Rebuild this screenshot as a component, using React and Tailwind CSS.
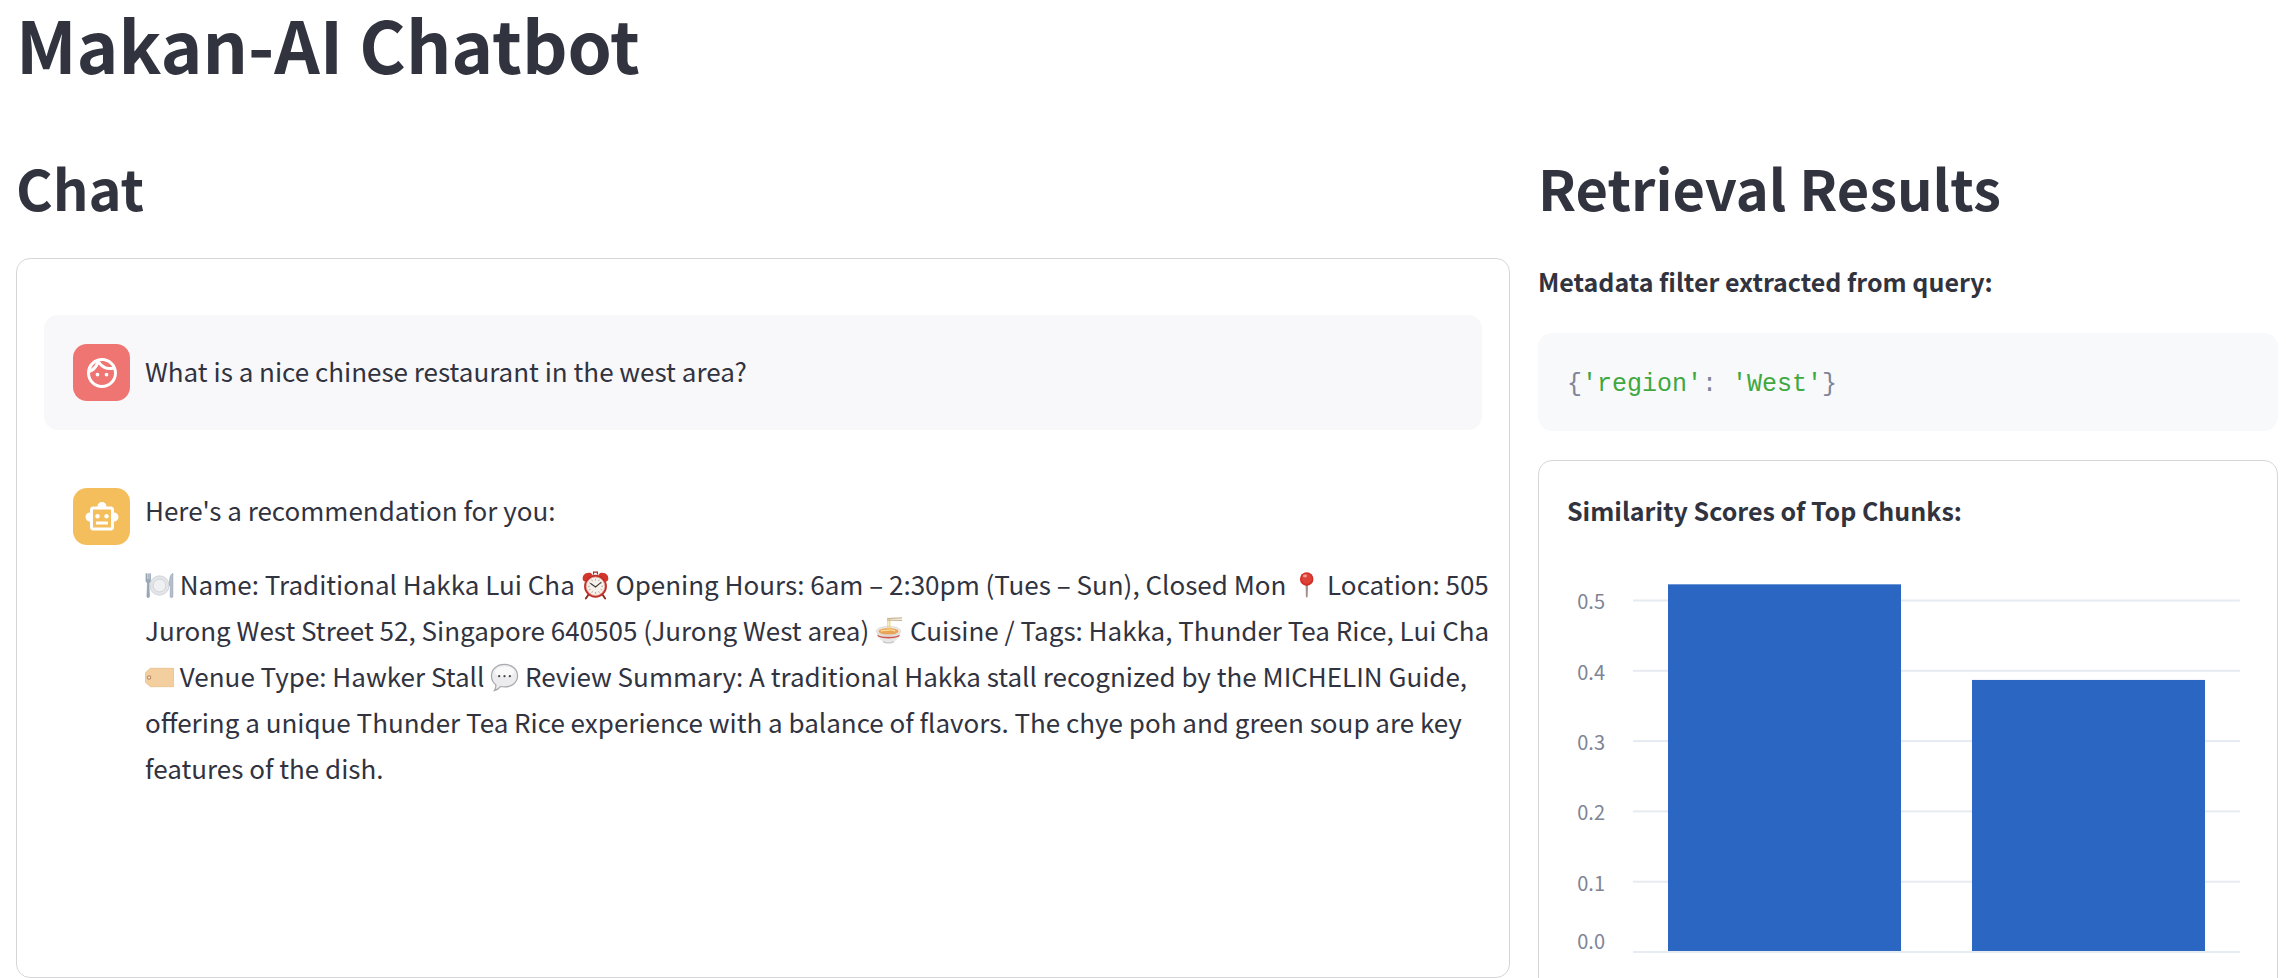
import { MdOutlineFace, MdOutlineSmartToy } from "react-icons/md";

function Emoji({ label, children }) {
  return (
    <svg
      role="img"
      aria-label={label}
      viewBox="0 0 30 30"
      className="inline-block size-[29px] align-[-5px]"
    >
      {children}
    </svg>
  );
}

function Plate() {
  return (
    <Emoji label="Plate with cutlery">
      <circle cx="15" cy="15" r="10" fill="#e3e5e8" stroke="#c9ccd1" strokeWidth="0.8" />
      <circle cx="15" cy="15" r="6.6" fill="#eff0f2" stroke="#cfd2d6" strokeWidth="0.9" />
      <path d="M1 2.5v7c0 1.8 1 2.6 1.6 2.8L2 26.5c0 1.3 2.6 1.3 2.6 0L4 12.300c.8-.2 1.700-1 1.700-2.800v-7" fill="#9aa8b8" stroke="#8494a6" strokeWidth="0.6" />
      <path d="M2.500 2.500v6M4.200 2.500v6" stroke="#dfe5ec" strokeWidth="0.7" />
      <path d="M28.800 2.500c-2.600 1-3.600 5-3.500 12.500l1 1-.3 10.500c0 1.300 2.800 1.300 2.800 0z" fill="#b3bfcc" stroke="#8c9aab" strokeWidth="0.6" />
    </Emoji>
  );
}

function Clock() {
  return (
    <Emoji label="Alarm clock">
      <path d="M8 24l-3 4.500M22 24l3 4.500" stroke="#8d2a24" strokeWidth="2" strokeLinecap="round" />
      <path d="M2 9.500C.6 5 4.500.8 10.500 2.200L12 4 4 11zM28 9.500C29.400 5 25.500.8 19.500 2.200L18 4l8 7z" fill="#d2352c" />
      <path d="M13 3.500V1.200h4v2.300" fill="none" stroke="#9c2a24" strokeWidth="1.200" />
      <circle cx="15" cy="15.800" r="11.800" fill="#bf2f27" />
      <circle cx="15" cy="15.800" r="9.600" fill="#f6f1ea" stroke="#e9a79f" strokeWidth="0.800" />
      <path d="M15 8v1.800M15 21.800v1.800M7.200 15.800H9M21 15.800h1.800M11.100 9l.8 1.500M18.900 9l-.8 1.500M8.300 12l1.400.8M21.700 12l-1.400.8M8.300 19.600l1.400-.8M21.700 19.600l-1.400-.8M11.100 22.500l.8-1.500M18.900 22.500l-.8-1.500" stroke="#8b8680" strokeWidth="0.700" />
      <path d="M10 13l5 3.500 5.500-4.500" fill="none" stroke="#3c3a38" strokeWidth="1.200" strokeLinecap="round" />
    </Emoji>
  );
}

function Pin() {
  return (
    <Emoji label="Round pushpin">
      <path d="M14 12h2.600l-.4 14.500c-.1 1.300-1.700 1.300-1.800 0z" fill="#a38d84" />
      <circle cx="15.200" cy="8.200" r="7" fill="#cf2d25" />
      <circle cx="15.200" cy="7.800" r="5.400" fill="#de4138" />
      <ellipse cx="13.500" cy="5.200" rx="2.200" ry="1.500" fill="#f39a91" />
    </Emoji>
  );
}

function Bowl() {
  return (
    <Emoji label="Steaming bowl">
      <ellipse cx="14" cy="25.500" rx="6" ry="1.800" fill="#c9c9cb" />
      <path d="M1.500 14.500c.3 7 5 11.500 12.500 11.500s12.200-4.500 12.500-11.500z" fill="#e9e7e6" />
      <path d="M2.300 18.300c6 3 17.500 3 23.400 0l-.7 2c-5.500 2.600-16.500 2.600-22 0z" fill="#d0574d" />
      <ellipse cx="14" cy="14.500" rx="12.500" ry="4.600" fill="#f1efed" stroke="#cdc9c6" strokeWidth="0.700" />
      <ellipse cx="14" cy="14.800" rx="10.500" ry="3.400" fill="#e8a45b" />
      <path d="M6 14.800c3-2 5-.2 8-1.200s5 .2 7 .8" fill="none" stroke="#f8dc94" strokeWidth="1.300" />
      <path d="M13.300 14V2.500M15.300 14V2.500" stroke="#f0cf6c" strokeWidth="1.200" />
      <path d="M12.500 1.600L28 1M12.500 3.300L28 3.600" stroke="#c9b592" strokeWidth="1.300" />
    </Emoji>
  );
}

function Tag() {
  return (
    <Emoji label="Label">
      <path d="M5.500 5.500H29c.6 0 1 .4 1 1v17c0 .6-.4 1-1 1H5.500L.5 20V10z" fill="#f3cfa0" stroke="#e6bb85" strokeWidth="0.800" />
      <circle cx="4.200" cy="15" r="2.300" fill="#c28d63" />
      <circle cx="4.200" cy="15" r="1.100" fill="#f8f4ef" />
    </Emoji>
  );
}

function Bubble() {
  return (
    <Emoji label="Speech balloon">
      <path d="M15 1.500c8 0 13.500 5 13.500 11.600S23 24.700 15 24.700c-1.500 0-2.800-.1-4-.4-1.500 2-3.700 3.600-6.500 4.200 1.200-1.800 1.700-3.800 1.500-6C3.200 20.300 1.500 17 1.500 13.100 1.500 6.500 7 1.500 15 1.500z" fill="#ececee" stroke="#a9aaae" strokeWidth="1.300" />
      <ellipse cx="15" cy="9" rx="10" ry="5.500" fill="#f9f9fa" />
      <circle cx="9.500" cy="13.600" r="1.200" fill="#45464a" />
      <circle cx="15" cy="13.600" r="1.200" fill="#45464a" />
      <circle cx="20.500" cy="13.600" r="1.200" fill="#45464a" />
    </Emoji>
  );
}

function UserMessage({ children }) {
  return (
    <article className="flex gap-[15px] rounded-[14px] bg-[#f8f8fa] py-[29px] pl-[29px]">
      <div className="flex size-[57px] shrink-0 items-center justify-center rounded-[14px] bg-[#ee7571] text-white">
        <MdOutlineFace className="size-9" />
      </div>
      <div className="-mt-1 min-w-0 flex-1 self-center">{children}</div>
    </article>
  );
}

function AssistantMessage({ children }) {
  return (
    <article className="flex gap-[15px] py-[29px] pl-[29px]">
      <div className="flex size-[57px] shrink-0 items-center justify-center rounded-[14px] bg-[#f5be5d] text-white">
        <MdOutlineSmartToy className="size-9" />
      </div>
      <div className="-mt-px -mr-4 flex min-w-0 flex-1 flex-col gap-7">{children}</div>
    </article>
  );
}

const ticks = [0, 0.1, 0.2, 0.3, 0.4, 0.5];
const scores = [0.523, 0.387];
const baseY = 393;
const unit = 703;

function ScoreChart() {
  return (
    <svg viewBox="0 0 682 440" className="block w-full" role="img" aria-label="Similarity scores">
      {ticks.map((t) => (
        <g key={t}>
          <rect x="66" y={baseY - t * unit - 1} width="607" height="2" fill="#e6eaf1" />
          <text
            x="38"
            y={t === 0 ? baseY - 3 : baseY - t * unit + 9}
            textAnchor="end"
            className="fill-[#808495] text-[20px]"
          >
            {t.toFixed(1)}
          </text>
        </g>
      ))}
      {scores.map((s, i) => (
        <rect
          key={s}
          x={101 + i * 304}
          y={baseY - s * unit}
          width="233"
          height={s * unit - 1}
          fill="#2b66c2"
        />
      ))}
    </svg>
  );
}

export default function App() {
  return (
    <main className="h-screen overflow-hidden bg-white pr-2 pl-4 font-['Noto_Sans_CJK_SC','Noto_Sans',sans-serif] text-[26px] leading-[46px] text-[#31333f]">
      <h1 className="text-[71px] leading-[86px] font-bold">Makan-AI Chatbot</h1>
      <div className="mt-[66px] flex items-start justify-between">
        <section className="w-[calc(66.6667%-14px)]">
          <h2 className="text-[56px] leading-[70px] font-semibold">Chat</h2>
          <div className="mt-9 flex min-h-[720px] flex-col gap-[29px] rounded-[14px] border border-[#d6d6d9] px-[27px] pt-14 pb-7">
            <UserMessage>
              <p>What is a nice chinese restaurant in the west area?</p>
            </UserMessage>
            <AssistantMessage>
              <p>Here's a recommendation for you:</p>
              <p>
                <Plate /> Name: Traditional Hakka Lui Cha <Clock /> Opening Hours: 6am – 2:30pm (Tues – Sun),
                Closed Mon <Pin /> Location: 505 Jurong West Street 52, Singapore 640505 (Jurong West area){" "}
                <Bowl /> Cuisine / Tags: Hakka, Thunder Tea Rice, Lui Cha <Tag /> Venue Type: Hawker Stall{" "}
                <Bubble /> Review Summary: A traditional Hakka stall recognized by the MICHELIN Guide, offering
                a unique Thunder Tea Rice experience with a balance of flavors. The chye poh and green soup are
                key features of the dish.
              </p>
            </AssistantMessage>
          </div>
        </section>
        <section className="w-[calc(33.3333%-14px)]">
          <h2 className="text-[56px] leading-[70px] font-semibold">Retrieval Results</h2>
          <p className="mt-9 text-[25px] font-semibold">Metadata filter extracted from query:</p>
          <pre className="mt-[29px] rounded-[14px] bg-[#f8f9fb] px-[29px] pt-[29px] pb-[23px] font-['Liberation_Mono',monospace] text-[25px] text-[#808495]">
            <code className="font-['Liberation_Mono',monospace]">
              {"{"}
              <span className="text-[#3fa83f]">'region'</span>:{" "}
              <span className="text-[#3fa83f]">'West'</span>
              {"}"}
            </code>
          </pre>
          <div className="mt-[29px] rounded-[14px] border border-[#d6d6d9] px-7 pt-[26px] pb-7">
            <p className="text-[25px] font-semibold">Similarity Scores of Top Chunks:</p>
            <div className="mt-[26px]">
              <ScoreChart />
            </div>
          </div>
        </section>
      </div>
    </main>
  );
}
